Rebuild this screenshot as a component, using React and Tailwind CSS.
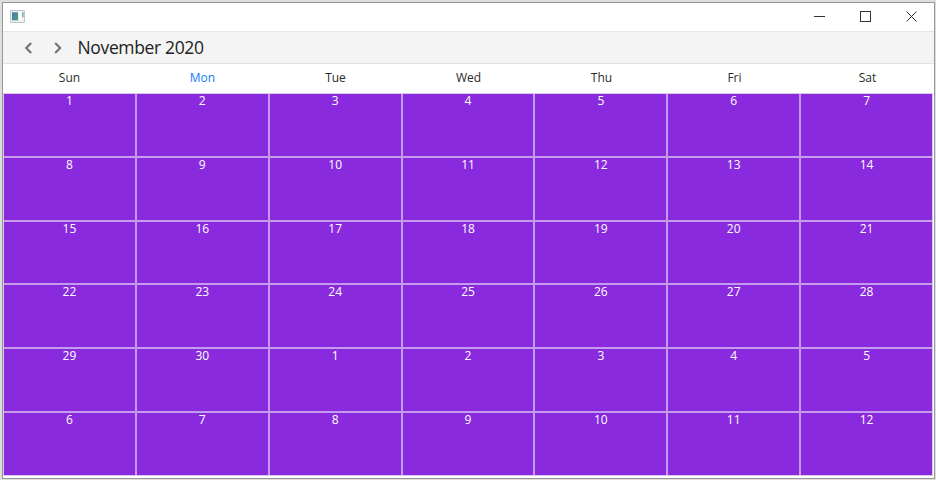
const weekdays = ['Sun', 'Mon', 'Tue', 'Wed', 'Thu', 'Fri', 'Sat'];
const days = Array.from({ length: 42 }, (_, i) => (i < 30 ? i + 1 : i - 29));

function TitleBar() {
  return (
    <div className="flex h-[29px] shrink-0 items-center justify-between border-b border-[#e6e6e6] bg-white pb-[2px] pl-[7px] pr-[17px]">
      <svg width="15" height="13" viewBox="0 0 15 13" aria-hidden="true">
        <defs>
          <linearGradient id="pane" x1="0" y1="0" x2="1" y2="1">
            <stop offset="0" stopColor="#4a78b0" />
            <stop offset="1" stopColor="#4da07c" />
          </linearGradient>
        </defs>
        <rect x="0.5" y="0.5" width="14" height="12" rx="0.5" fill="#eceef0" stroke="#bfc4c9" />
        <rect x="2" y="2.3" width="6" height="8" fill="url(#pane)" />
        <rect x="9" y="2.3" width="2.5" height="8" fill="#ffffff" />
        <rect x="12" y="2.3" width="1.5" height="5" fill="#76a99c" />
      </svg>
      <div className="flex items-center gap-[35px] text-[#333333]">
        <svg width="11" height="11" viewBox="0 0 11 11" fill="none" stroke="currentColor">
          <path d="M0 5.5H11" />
        </svg>
        <svg width="11" height="11" viewBox="0 0 11 11" fill="none" stroke="currentColor">
          <rect x="0.5" y="0.5" width="10" height="10" />
        </svg>
        <svg width="11" height="11" viewBox="0 0 11 11" fill="none" stroke="currentColor">
          <path d="M0.5 0.5L10.5 10.5M10.5 0.5L0.5 10.5" />
        </svg>
      </div>
    </div>
  );
}

function Toolbar() {
  return (
    <div className="flex h-8 shrink-0 items-center border-b border-[#e2e2e2] bg-[#f4f4f4] pl-[21px]">
      <svg width="9" height="12" viewBox="0 0 9 12" fill="none" stroke="#707070" strokeWidth="2">
        <path d="M7.2 1L2.2 6L7.2 11" />
      </svg>
      <svg className="ml-[21px]" width="9" height="12" viewBox="0 0 9 12" fill="none" stroke="#707070" strokeWidth="2">
        <path d="M1.2 1L6.2 6L1.2 11" />
      </svg>
      <h1 className="ml-[14.5px] whitespace-nowrap pb-[1px] text-[17.5px] leading-[30px] tracking-[-0.35px] text-[#222222]">
        November 2020
      </h1>
    </div>
  );
}

export default function App() {
  return (
    <div className="flex h-[480px] w-[936px] bg-[#dedede] p-[2px] pr-[1px] pb-[1px] font-['Open_Sans','Noto_Sans',sans-serif]">
      <div className="flex min-w-0 flex-1 flex-col border border-[#969696] bg-white">
        <TitleBar />
        <Toolbar />
        <div className="grid h-[29px] shrink-0 grid-cols-7 text-center text-[12px] leading-[28px] text-[#2b2b2b]">
          {weekdays.map((day) => (
            <div key={day} className={day === 'Mon' ? 'text-[#147cf5]' : ''}>
              {day}
            </div>
          ))}
        </div>
        <div className="mr-[1px] mb-[2px] grid min-h-0 flex-1 grid-cols-7 grid-rows-6 gap-[2px] border border-[#d9c8e9] bg-[#c59ced]">
          {days.map((day, i) => (
            <div key={i} className="min-h-0 bg-[#8a2ade] text-center text-[12px] leading-[13px] text-white">
              {day}
            </div>
          ))}
        </div>
      </div>
    </div>
  );
}
